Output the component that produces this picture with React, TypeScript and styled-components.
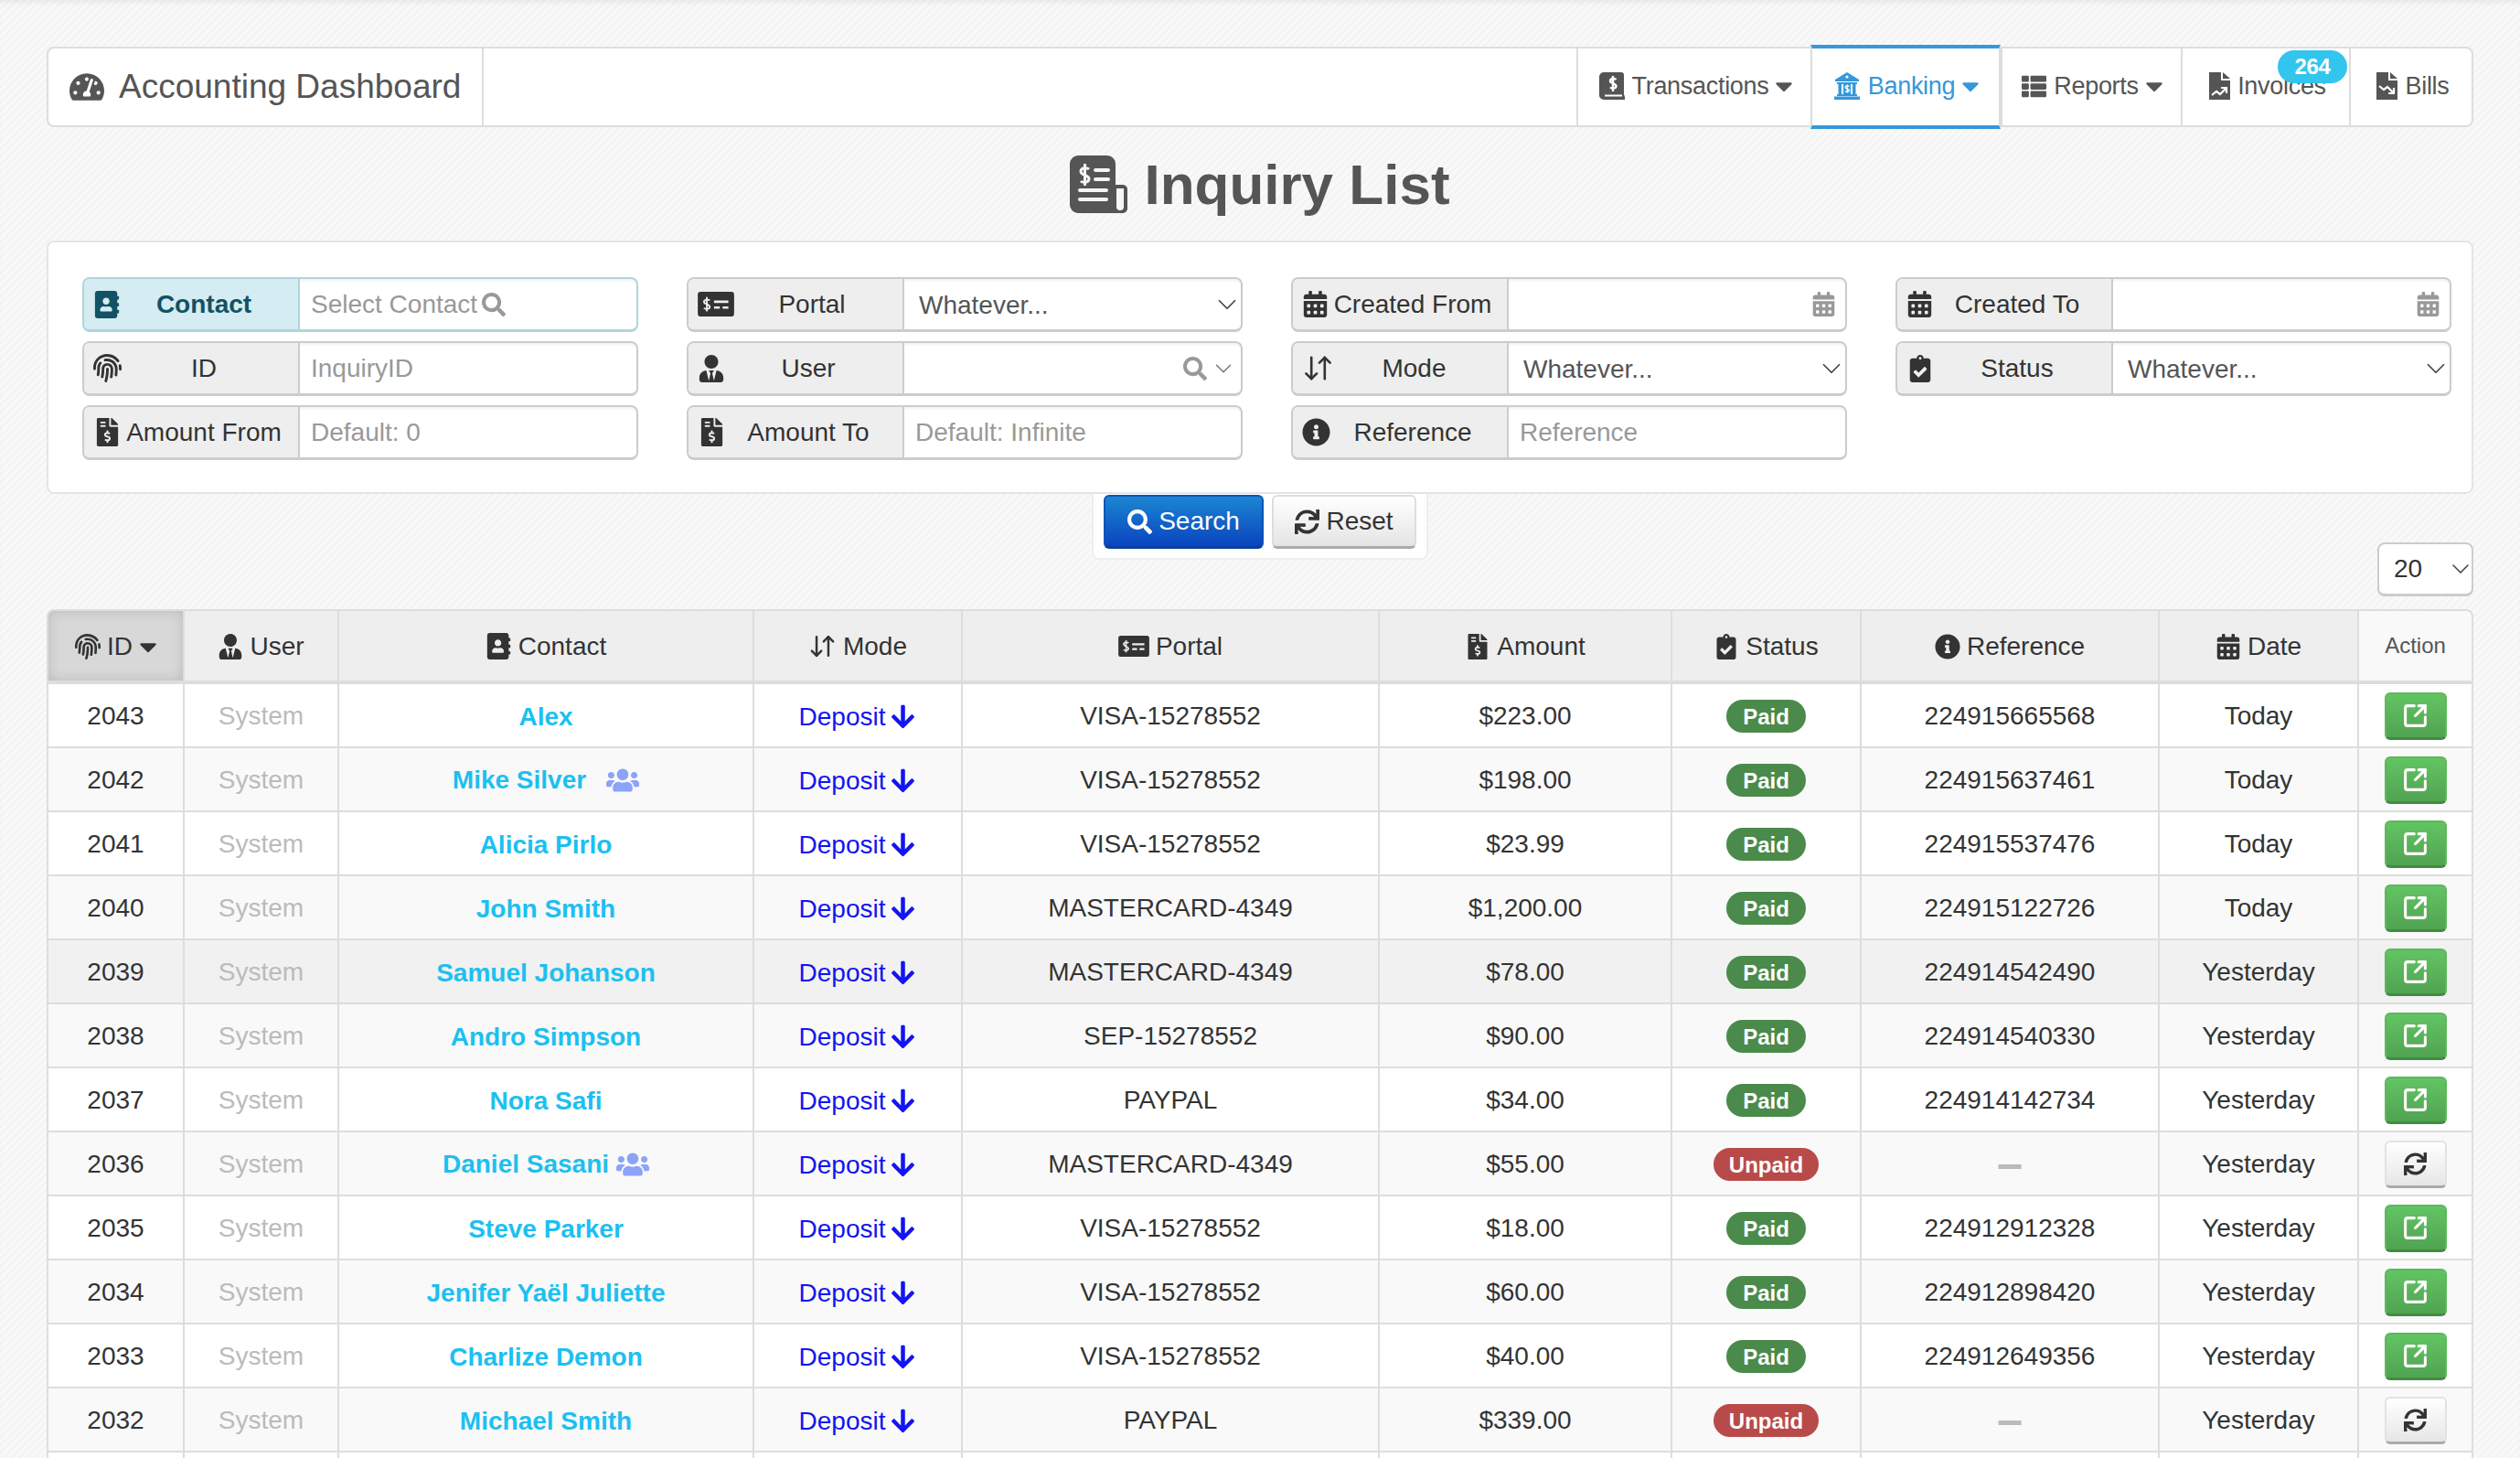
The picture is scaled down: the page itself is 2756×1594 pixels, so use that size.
import { ReactElement, ReactNode } from 'react'
import styled, { createGlobalStyle } from 'styled-components'
import {
  FaAddressBook,
  FaArrowDown,
  FaCalendarAlt,
  FaCaretDown,
  FaClipboardCheck,
  FaFileInvoiceDollar,
  FaFingerprint,
  FaInfoCircle,
  FaSearch,
  FaSync,
  FaTachometerAlt,
  FaThList,
  FaUsers,
  FaUserTie,
} from 'react-icons/fa'
import { ArrowDownUp, ChevronDown, SquareArrowOutUpRight } from 'lucide-react'

const GlobalStyle = createGlobalStyle`
  html, body {
    margin: 0;
    height: 100%;
    overflow: hidden;
  }
  * {
    box-sizing: border-box;
  }
  body {
    font-family: "Liberation Sans", Arial, sans-serif;
    font-size: 28px;
    color: #333;
  }
`

const Page = styled.div`
  height: 1594px;
  overflow: hidden;
  padding: 51px 51px 0;
  background: repeating-linear-gradient(135deg, #f4f4f4 0 3px, #f9f9f9 3px 6px);
  box-shadow: inset 0 5px 5px -2px rgba(0, 0, 0, 0.06);
`

const Navbar = styled.nav`
  display: flex;
  height: 88px;
  background: #fff;
  border: 2px solid #ddd;
  border-radius: 8px;
  color: #555;
`

const Brand = styled.div`
  display: flex;
  align-items: center;
  gap: 16px;
  width: 476px;
  padding-left: 23px;
  border-right: 2px solid #ddd;
  font-size: 37px;
`

const NavGroup = styled.div`
  display: flex;
  margin-left: auto;
`

const NavItem = styled.div<{ $active?: boolean; $width: number }>`
  position: relative;
  display: flex;
  align-items: center;
  justify-content: center;
  gap: 8px;
  width: ${({ $width }): number => $width}px;
  margin: ${({ $active }): string => ($active ? '-4px 0 -4px -2px' : '0')};
  padding: 0 0 2px 4px;
  font-size: 27px;
  letter-spacing: -0.3px;
  color: ${({ $active }): string => ($active ? '#3498db' : '#555')};
  border-left: 2px solid #ddd;
  ${({ $active }): string =>
    $active
      ? 'border-top: 4px solid #3498db; border-bottom: 4px solid #3498db; border-right: 2px solid #ddd;'
      : ''}
`

const NavCaret = styled(FaCaretDown)`
  margin: 0 -3px 0 -6px;
`

const Badge = styled.span`
  position: absolute;
  top: 2px;
  right: 2px;
  width: 76px;
  height: 36px;
  border-radius: 18px;
  background: #32c5ee;
  color: #fff;
  font-size: 24px;
  font-weight: bold;
  line-height: 36px;
  text-align: center;
`

const Title = styled.h1`
  display: flex;
  align-items: center;
  justify-content: center;
  gap: 18px;
  height: 124px;
  margin: 0;
  font-size: 62px;
  font-weight: bold;
  color: #555;
`

const FilterPanel = styled.section`
  display: grid;
  grid-template-columns: repeat(4, 608px);
  column-gap: 53px;
  row-gap: 10px;
  align-content: start;
  height: 277px;
  padding: 38px 0 0 37px;
  background: #fff;
  border: 2px solid #e4e4e4;
  border-radius: 8px;
`

const Field = styled.div<{ $focus?: boolean }>`
  display: flex;
  height: 60px;
  background: #fff;
  border: 2px solid ${({ $focus }): string => ($focus ? '#b0d5de' : '#ccc')};
  border-bottom-width: 3px;
  border-radius: 8px;
  overflow: hidden;
  box-shadow: inset 0 3px 3px -1px rgba(0, 0, 0, 0.06);
`

const Addon = styled.div<{ $focus?: boolean }>`
  display: flex;
  align-items: center;
  flex: 0 0 236px;
  padding: 0 14px 0 10px;
  background: ${({ $focus }): string => ($focus ? '#d4ecf2' : '#eee')};
  color: ${({ $focus }): string => ($focus ? '#125264' : '#333')};
  font-weight: ${({ $focus }): string => ($focus ? 'bold' : 'normal')};
  border-right: 2px solid ${({ $focus }): string => ($focus ? '#b0d5de' : '#ccc')};
`

const AddonIcon = styled.span`
  display: flex;
  flex: 0 0 32px;
  align-items: center;
`

const AddonLabel = styled.span`
  flex: 1;
  text-align: center;
  white-space: nowrap;
`

const TextInput = styled.input`
  flex: 1;
  min-width: 0;
  padding: 0 12px;
  border: 0;
  outline: 0;
  background: transparent;
  font: inherit;
  color: #555;
  &::placeholder {
    color: #999;
    opacity: 1;
  }
`

const FieldBody = styled.div<{ $pad?: number }>`
  display: flex;
  align-items: center;
  flex: 1;
  gap: 6px;
  padding: 0 10px 0 ${({ $pad }): number => $pad ?? 16}px;
  color: #555;
`

const Placeholder = styled.span`
  color: #999;
  display: inline-flex;
  align-items: center;
  gap: 5px;
`

const SelectValue = styled.span`
  padding-top: 2px;
`

const GrayIcons = styled.span`
  display: flex;
  align-items: center;
  gap: 3px;
  margin-left: auto;
  color: #999;
`

const Chevron = styled(ChevronDown)`
  margin: 0 -12px 0 auto;
  color: #444;
`

const UserChevron = styled(ChevronDown)`
  margin-right: -6px;
  color: #777;
`

const Toolbar = styled.div`
  display: grid;
  grid-template-columns: 1fr auto 1fr;
  height: 112px;
  margin-bottom: 14px;
`

const ButtonTab = styled.div`
  grid-column: 2;
  display: flex;
  gap: 9px;
  height: 72px;
  padding: 1px 11px 0;
  background: #fff;
  border: 2px solid #eee;
  border-top: 0;
  border-radius: 0 0 8px 8px;
`

const Button = styled.button<{ $primary?: boolean }>`
  display: flex;
  align-items: center;
  justify-content: center;
  gap: 7px;
  width: ${({ $primary }): number => ($primary ? 175 : 158)}px;
  height: 59px;
  padding: 0;
  font: inherit;
  border-radius: 6px;
  color: ${({ $primary }): string => ($primary ? '#fff' : '#333')};
  background: ${({ $primary }): string =>
    $primary
      ? 'linear-gradient(#1b86d2, #0a44bf)'
      : 'linear-gradient(#fff, #e4e4e4)'};
  border: 2px solid ${({ $primary }): string => ($primary ? '#0a55b8' : '#ddd')};
  border-bottom: 3px solid ${({ $primary }): string => ($primary ? '#0a3e9e' : '#aaa')};
`

const PageSize = styled.div`
  grid-column: 3;
  justify-self: end;
  align-self: end;
  display: flex;
  align-items: center;
  width: 105px;
  height: 59px;
  padding: 0 8px 0 16px;
  background: #fff;
  border: 2px solid #ccc;
  border-bottom-width: 3px;
  border-radius: 8px;
`

const TableFrame = styled.div`
  border: 2px solid #ddd;
  border-bottom: 0;
  border-radius: 8px 8px 0 0;
  overflow: hidden;
`

const Table = styled.table`
  width: 100%;
  table-layout: fixed;
  border-collapse: separate;
  border-spacing: 0;
`

const Col = styled.col<{ $w: number }>`
  width: ${({ $w }): number => $w}px;
`

const HeadCell = styled.th<{ $sorted?: boolean; $plain?: boolean }>`
  height: 80px;
  padding: 0;
  font-weight: normal;
  font-size: ${({ $plain }): number => ($plain ? 24 : 28)}px;
  color: ${({ $plain }): string => ($plain ? '#555' : '#333')};
  background: ${({ $sorted, $plain }): string =>
    $sorted ? '#d8d8d8' : $plain ? '#f9f9f9' : '#eee'};
  box-shadow: ${({ $sorted }): string =>
    $sorted ? 'inset 0 0 14px rgba(0, 0, 0, 0.14)' : 'none'};
  border-right: 2px solid #ddd;
  border-bottom: 4px solid #ddd;
  &:last-child {
    border-right: 0;
  }
`

const HeadContent = styled.span`
  display: inline-flex;
  align-items: center;
  gap: 7px;
  vertical-align: middle;
`

const HeadCaret = styled(FaCaretDown)`
  margin: 0 -6px 0 -5px;
`

const Row = styled.tr<{ $tone: string }>`
  background: ${({ $tone }): string => $tone};
`

const Cell = styled.td`
  height: 70px;
  padding: 2px 0 0;
  text-align: center;
  border-right: 2px solid #ddd;
  border-bottom: 2px solid #ddd;
  &:last-child {
    border-right: 0;
  }
`

const SystemText = styled.span`
  color: #bbb;
`

const ContactName = styled.span<{ $gap: number }>`
  display: inline-flex;
  align-items: center;
  gap: ${({ $gap }): number => $gap}px;
  font-weight: bold;
  color: #1cc0f0;
  vertical-align: middle;
`

const GroupIcon = styled(FaUsers)`
  color: #8ca3f7;
`

const DepositLink = styled.span`
  display: inline-flex;
  align-items: center;
  gap: 5px;
  color: #1414f0;
  vertical-align: middle;
`

const Pill = styled.span<{ $paid: boolean }>`
  display: inline-block;
  height: 36px;
  padding: 0 ${({ $paid }): number => ($paid ? 18 : 17)}px;
  border-radius: 18px;
  background: ${({ $paid }): string => ($paid ? '#4a8a4a' : '#b94a4a')};
  color: #fff;
  font-size: 24px;
  font-weight: bold;
  line-height: 37px;
  vertical-align: middle;
`

const Dash = styled.span`
  display: inline-block;
  color: #bbb;
  font-size: 25px;
  font-weight: bold;
  transform: translateY(-2px) scaleY(2);
`

const ActionButton = styled.button<{ $retry: boolean }>`
  display: inline-flex;
  align-items: center;
  justify-content: center;
  width: 68px;
  height: 52px;
  padding: 0;
  vertical-align: middle;
  border-radius: 6px;
  color: ${({ $retry }): string => ($retry ? '#333' : '#fff')};
  background: ${({ $retry }): string =>
    $retry ? 'linear-gradient(#fff, #e6e6e6)' : 'linear-gradient(#62c462, #51a351)'};
  border: 2px solid ${({ $retry }): string => ($retry ? '#e2e2e2' : '#5cb85c')};
  border-bottom: 3px solid ${({ $retry }): string => ($retry ? '#aaa' : '#458a45')};
`

const ReceiptIcon = (): ReactElement => (
  <svg width="63" height="63" viewBox="0 0 63 63" fill="none">
    <path
      d="M9 0h32a9 9 0 0 1 9 9v23h8a5 5 0 0 1 5 5v21a5 5 0 0 1-5 5H9a9 9 0 0 1-9-9V9a9 9 0 0 1 9-9z"
      fill="currentColor"
    />
    <path d="M51 36h8v20a4 4 0 0 1-8 0z" fill="#f6f6f6" />
    <path
      d="M21 15c-2-2-9-2-9 2.500s9 3.500 9 8-7 4.500-9 2.500M16.500 9v24"
      stroke="#f6f6f6"
      strokeWidth="3"
    />
    <path
      d="M28 16h14M28 26h14M11 38h29M11 48h29"
      stroke="#f6f6f6"
      strokeWidth="4"
      strokeLinecap="round"
    />
  </svg>
)

const LedgerIcon = (): ReactElement => (
  <svg width="28" height="30" viewBox="0 0 28 30" fill="none">
    <path
      d="M5 0h19a3 3 0 0 1 3 3v21l1 3v3H5a5 5 0 0 1-5-5V5a5 5 0 0 1 5-5z"
      fill="currentColor"
    />
    <path d="M6 25.500h19" stroke="#fff" strokeWidth="2" />
    <path
      d="M18.500 8c-1.500-1.500-6.500-1.500-6.500 1.500s6.500 2.500 6.500 5.500-5 3-6.500 1.500M15 4v17"
      stroke="#fff"
      strokeWidth="2.400"
    />
  </svg>
)

const BankIcon = (): ReactElement => (
  <svg width="30" height="30" viewBox="0 0 30 30" fill="none">
    <path d="M15 0l13 8v2H2V8z" fill="currentColor" />
    <circle cx="15" cy="5" r="1.600" fill="#fff" />
    <path d="M4 11h22v2h-1.500v11H26v2H4v-2h1.500V13H4z" fill="currentColor" />
    <path d="M9 13h12v11H9z" fill="#fff" />
    <path d="M11 13h8v11h-8z" fill="currentColor" />
    <path
      d="M17.500 15.500c-1-1-4.500-1-4.500.900s4.500 1.400 4.500 3.300-3.500 2-4.500.900M15.200 13.500v9"
      stroke="#fff"
      strokeWidth="1.300"
    />
    <path d="M1 26.500h28V30H1z" fill="currentColor" />
  </svg>
)

const TrendFileIcon = ({ down }: { down?: boolean }): ReactElement => (
  <svg width="23" height="30" viewBox="0 0 23 30" fill="none">
    <path d="M0 0h13v9h10v21H0z" fill="currentColor" />
    <path d="M15 0l8 7h-8z" fill="currentColor" />
    {down ? (
      <path d="M3 15l5 4 4-3 6 6M19 17v6h-6" stroke="#fff" strokeWidth="2.200" />
    ) : (
      <path d="M3 25l5-4 4 3 6-6M13 17h6v6" stroke="#fff" strokeWidth="2.200" />
    )}
  </svg>
)

const PortalIcon = ({ width }: { width: number }): ReactElement => (
  <svg width={width} height={width * 0.68} viewBox="0 0 38 26" fill="none">
    <rect width="38" height="26" rx="3" fill="currentColor" />
    <path
      d="M12.500 9c-1-1.200-6-1.200-6 1.500s6 2.500 6 5.200-5 2.700-6 1.300M9.500 5.500v15"
      stroke="#eee"
      strokeWidth="1.800"
    />
    <path d="M17 10.500h15M17 16.500h6M26 16.500h6" stroke="#eee" strokeWidth="2.600" />
  </svg>
)

const InputAddon = ({
  icon,
  label,
  focus,
}: {
  icon: ReactNode
  label: string
  focus?: boolean
}): ReactElement => (
  <Addon $focus={focus}>
    <AddonIcon>{icon}</AddonIcon>
    <AddonLabel>{label}</AddonLabel>
  </Addon>
)

const thin = 1.2

const rows = [
  ['2043', 'Alex', 'VISA-15278552', '$223.00', true, '224915665568', 'Today', false],
  ['2042', 'Mike Silver', 'VISA-15278552', '$198.00', true, '224915637461', 'Today', true],
  ['2041', 'Alicia Pirlo', 'VISA-15278552', '$23.99', true, '224915537476', 'Today', false],
  ['2040', 'John Smith', 'MASTERCARD-4349', '$1,200.00', true, '224915122726', 'Today', false],
  ['2039', 'Samuel Johanson', 'MASTERCARD-4349', '$78.00', true, '224914542490', 'Yesterday', false],
  ['2038', 'Andro Simpson', 'SEP-15278552', '$90.00', true, '224914540330', 'Yesterday', false],
  ['2037', 'Nora Safi', 'PAYPAL', '$34.00', true, '224914142734', 'Yesterday', false],
  ['2036', 'Daniel Sasani', 'MASTERCARD-4349', '$55.00', false, '', 'Yesterday', true],
  ['2035', 'Steve Parker', 'VISA-15278552', '$18.00', true, '224912912328', 'Yesterday', false],
  ['2034', 'Jenifer Yaël Juliette', 'VISA-15278552', '$60.00', true, '224912898420', 'Yesterday', false],
  ['2033', 'Charlize Demon', 'VISA-15278552', '$40.00', true, '224912649356', 'Yesterday', false],
  ['2032', 'Michael Smith', 'PAYPAL', '$339.00', false, '', 'Yesterday', false],
] as const

const colWidths = [149, 169, 454, 228, 456, 320, 207, 326, 218, 123]

const heads: { label: string; icon: ReactNode }[] = [
  { label: 'User', icon: <FaUserTie size={28} /> },
  { label: 'Contact', icon: <FaAddressBook size={29} /> },
  { label: 'Mode', icon: <ArrowDownUp size={31} strokeWidth={1.9} /> },
  { label: 'Portal', icon: <PortalIcon width={34} /> },
  { label: 'Amount', icon: <FaFileInvoiceDollar size={28} /> },
  { label: 'Status', icon: <FaClipboardCheck size={28} /> },
  { label: 'Reference', icon: <FaInfoCircle size={28} /> },
  { label: 'Date', icon: <FaCalendarAlt size={28} /> },
]

const rowTone = (index: number): string => {
  if (index === 4) return '#f1f1f1'
  return index % 2 === 0 ? '#fff' : '#f9f9f9'
}

const App = (): ReactElement => {
  return (
    <Page>
      <GlobalStyle />
      <Navbar>
        <Brand>
          <FaTachometerAlt size={38} />
          Accounting Dashboard
        </Brand>
        <NavGroup>
          <NavItem $width={258}>
            <LedgerIcon />
            Transactions
            <NavCaret size={30} />
          </NavItem>
          <NavItem $width={208} $active>
            <BankIcon />
            Banking
            <NavCaret size={30} />
          </NavItem>
          <NavItem $width={197}>
            <FaThList size={27} />
            Reports
            <NavCaret size={30} />
          </NavItem>
          <NavItem $width={184}>
            <TrendFileIcon />
            Invoices
            <Badge>264</Badge>
          </NavItem>
          <NavItem $width={134}>
            <TrendFileIcon down />
            Bills
          </NavItem>
        </NavGroup>
      </Navbar>

      <Title>
        <ReceiptIcon />
        Inquiry List
      </Title>

      <FilterPanel>
        <Field $focus>
          <InputAddon focus icon={<FaAddressBook size={30} />} label="Contact" />
          <FieldBody $pad={12}>
            <Placeholder>
              Select Contact
              <FaSearch size={26} />
            </Placeholder>
          </FieldBody>
        </Field>
        <Field>
          <InputAddon icon={<PortalIcon width={40} />} label="Portal" />
          <FieldBody>
            <SelectValue>Whatever...</SelectValue>
            <Chevron size={34} strokeWidth={thin} />
          </FieldBody>
        </Field>
        <Field>
          <InputAddon icon={<FaCalendarAlt size={29} />} label="Created From" />
          <FieldBody>
            <GrayIcons>
              <FaCalendarAlt size={27} />
            </GrayIcons>
          </FieldBody>
        </Field>
        <Field>
          <InputAddon icon={<FaCalendarAlt size={29} />} label="Created To" />
          <FieldBody>
            <GrayIcons>
              <FaCalendarAlt size={27} />
            </GrayIcons>
          </FieldBody>
        </Field>

        <Field>
          <InputAddon icon={<FaFingerprint size={31} />} label="ID" />
          <TextInput placeholder="InquiryID" />
        </Field>
        <Field>
          <InputAddon icon={<FaUserTie size={30} />} label="User" />
          <FieldBody>
            <GrayIcons>
              <FaSearch size={26} />
              <UserChevron size={30} strokeWidth={thin} />
            </GrayIcons>
          </FieldBody>
        </Field>
        <Field>
          <InputAddon icon={<ArrowDownUp size={35} strokeWidth={1.8} />} label="Mode" />
          <FieldBody>
            <SelectValue>Whatever...</SelectValue>
            <Chevron size={34} strokeWidth={thin} />
          </FieldBody>
        </Field>
        <Field>
          <InputAddon icon={<FaClipboardCheck size={30} />} label="Status" />
          <FieldBody>
            <SelectValue>Whatever...</SelectValue>
            <Chevron size={34} strokeWidth={thin} />
          </FieldBody>
        </Field>

        <Field>
          <InputAddon icon={<FaFileInvoiceDollar size={31} />} label="Amount From" />
          <TextInput placeholder="Default: 0" />
        </Field>
        <Field>
          <InputAddon icon={<FaFileInvoiceDollar size={31} />} label="Amount To" />
          <TextInput placeholder="Default: Infinite" />
        </Field>
        <Field>
          <InputAddon icon={<FaInfoCircle size={31} />} label="Reference" />
          <TextInput placeholder="Reference" />
        </Field>
      </FilterPanel>

      <Toolbar>
        <ButtonTab>
          <Button $primary>
            <FaSearch size={27} />
            Search
          </Button>
          <Button>
            <FaSync size={27} />
            Reset
          </Button>
        </ButtonTab>
        <PageSize>
          20
          <Chevron size={32} strokeWidth={thin} />
        </PageSize>
      </Toolbar>

      <TableFrame>
        <Table>
          <colgroup>
            {colWidths.map((w, i) => (
              <Col key={i} $w={w} />
            ))}
          </colgroup>
          <thead>
            <tr>
              <HeadCell $sorted>
                <HeadContent>
                  <FaFingerprint size={28} />
                  ID
                  <HeadCaret size={30} />
                </HeadContent>
              </HeadCell>
              {heads.map((h) => (
                <HeadCell key={h.label}>
                  <HeadContent>
                    {h.icon}
                    {h.label}
                  </HeadContent>
                </HeadCell>
              ))}
              <HeadCell $plain>Action</HeadCell>
            </tr>
          </thead>
          <tbody>
            {rows.map(([id, name, portal, amount, paid, reference, date, group], i) => (
              <Row key={id} $tone={rowTone(i)}>
                <Cell>{id}</Cell>
                <Cell>
                  <SystemText>System</SystemText>
                </Cell>
                <Cell>
                  <ContactName $gap={id === '2042' ? 22 : 8}>
                    {name}
                    {group && <GroupIcon size={36} />}
                  </ContactName>
                </Cell>
                <Cell>
                  <DepositLink>
                    Deposit
                    <FaArrowDown size={29} />
                  </DepositLink>
                </Cell>
                <Cell>{portal}</Cell>
                <Cell>{amount}</Cell>
                <Cell>
                  <Pill $paid={paid}>{paid ? 'Paid' : 'Unpaid'}</Pill>
                </Cell>
                <Cell>{reference || <Dash>—</Dash>}</Cell>
                <Cell>{date}</Cell>
                <Cell>
                  <ActionButton $retry={!paid}>
                    {paid ? (
                      <SquareArrowOutUpRight size={29} strokeWidth={2.5} />
                    ) : (
                      <FaSync size={25} />
                    )}
                  </ActionButton>
                </Cell>
              </Row>
            ))}
            <Row $tone="#fff">
              {colWidths.map((_, i) => (
                <Cell key={i} />
              ))}
            </Row>
          </tbody>
        </Table>
      </TableFrame>
    </Page>
  )
}

export default App
